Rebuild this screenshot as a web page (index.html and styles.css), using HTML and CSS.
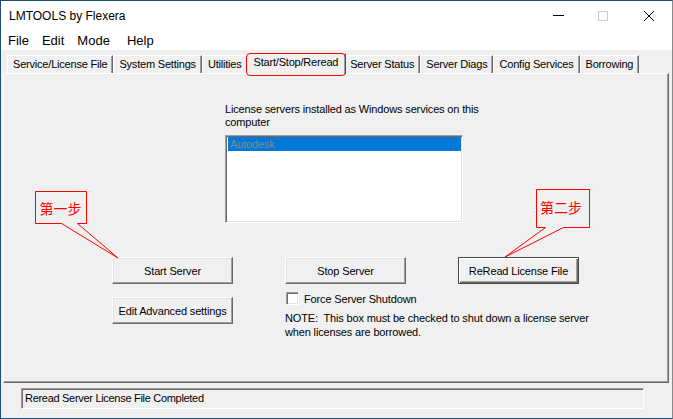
FILE: index.html
```html
<!DOCTYPE html>
<html lang="en">
<head>
<meta charset="utf-8">
<title>LMTOOLS by Flexera</title>
<link rel="stylesheet" href="styles.css">
</head>
<body>
<div class="window">
  <header class="titlebar">
    <span class="title">LMTOOLS by Flexera</span>
    <div class="caption-buttons">
      <span class="cap-btn cap-min"><svg width="12" height="10" viewBox="0 0 12 10"><path d="M0 4.5H11" stroke="#000" stroke-width="1"/></svg></span>
      <span class="cap-btn"><svg width="10" height="10" viewBox="0 0 10 10"><rect x="0.5" y="0.5" width="9" height="9" fill="none" stroke="#cccccc"/></svg></span>
      <span class="cap-btn"><svg width="10" height="10" viewBox="0 0 10 10"><path d="M0 0L10 10M10 0L0 10" stroke="#000" stroke-width="1"/></svg></span>
    </div>
  </header>
  <nav class="menubar">
    <span class="menu-item">File</span>
    <span class="menu-item">Edit</span>
    <span class="menu-item">Mode</span>
    <span class="menu-item">Help</span>
  </nav>
  <div class="client">
    <div class="tabs">
      <div class="tab">Service/License File</div>
      <div class="tab">System Settings</div>
      <div class="tab">Utilities</div>
      <div class="tab selected">Start/Stop/Reread</div>
      <div class="tab">Server Status</div>
      <div class="tab">Server Diags</div>
      <div class="tab">Config Services</div>
      <div class="tab">Borrowing</div>
    </div>
    <section class="panel">
      <div class="services">
        <p class="services-label">License servers installed as Windows services on this<br>computer</p>
        <div class="listbox">
          <div class="list-item selected">Autodesk</div>
        </div>
      </div>
      <div class="controls">
        <button class="btn">Start Server</button>
        <button class="btn">Stop Server</button>
        <button class="btn default">ReRead License File</button>
        <button class="btn btn-edit">Edit Advanced settings</button>
        <div class="shutdown">
          <label class="check"><span class="checkbox"></span>Force Server Shutdown</label>
          <p class="note">NOTE:&nbsp; This box must be checked to shut down a license server<br>when licenses are borrowed.</p>
        </div>
      </div>
    </section>
    <div class="statusbar">
      <div class="status-field">Reread Server License File Completed</div>
    </div>
  </div>
  <svg class="annotations" width="673" height="419" viewBox="0 0 673 419">
    <path d="M35.5 191.5H86.5V223.5H77.5L118 258L61.5 223.5H35.5Z" fill="none" stroke="#ff0000" stroke-width="1"/>
    <text class="callout-text" x="60.5" y="214" text-anchor="middle">第一步</text>
    <path d="M536.5 189.5H589.5V227.5H563.5L505 257L545.5 227.5H536.5Z" fill="none" stroke="#ff0000" stroke-width="1"/>
    <text class="callout-text" x="561" y="213" text-anchor="middle">第二步</text>
  </svg>
</div>
</body>
</html>
```

FILE: styles.css
```css
* {
  box-sizing: border-box;
}

html, body {
  margin: 0;
  padding: 0;
  background: #f0f0f0;
}

body {
  font-family: "Liberation Sans", Arial, sans-serif;
  color: #000;
}

.window {
  position: relative;
  width: 673px;
  height: 419px;
  border: 1px solid #1f4f72;
  border-right-color: #8a8a8a;
  background: #f0f0f0;
  overflow: hidden;
}

/* title bar */
.titlebar {
  display: flex;
  justify-content: space-between;
  align-items: stretch;
  height: 30px;
  background: #fff;
}

.title {
  padding-left: 8px;
  font-size: 12px;
  line-height: 30px;
  color: #000;
}

.caption-buttons {
  display: flex;
}

.cap-btn {
  display: flex;
  width: 46px;
  align-items: center;
  justify-content: center;
}

.cap-min {
  padding-left: 4px;
}

/* menu bar */
.menubar {
  display: flex;
  gap: 13px;
  height: 19px;
  padding: 1px 0 0 7px;
  background: #fff;
  font-size: 13px;
  line-height: 18px;
}

.menu-item:last-child {
  margin-left: 4px;
}

/* client area */
.client {
  font-size: 11px;
  letter-spacing: -0.15px;
}

.tabs {
  display: flex;
  align-items: flex-end;
  height: 23px;
  padding: 3px 0 0 6px;
  letter-spacing: -0.2px;
}

.tab {
  height: 18px;
  padding: 0 5px;
  border-top: 1px solid #fff;
  border-left: 1px solid #fff;
  border-right: 1px solid #696969;
  box-shadow: inset -1px 0 0 #a0a0a0;
  line-height: 17px;
  white-space: nowrap;
  background: #f0f0f0;
}

.tab.selected {
  position: relative;
  z-index: 2;
  height: 21px;
  margin: 0 -2px -1px;
  padding: 0 7px;
  line-height: 17px;
}

.tab.selected::after {
  content: "";
  position: absolute;
  top: -1px;
  bottom: -2px;
  left: -1px;
  right: -1px;
  border: 1px solid #ff0000;
  border-radius: 4px;
}

.panel {
  height: 310px;
  margin: 0 3px 0 2px;
  padding: 29px 0 0 108px;
  border-top: 1px solid #fff;
  border-left: 1px solid #fff;
  border-right: 1px solid #696969;
  border-bottom: 1px solid #696969;
  box-shadow: inset -1px -1px 0 #a0a0a0;
}

.services {
  padding-left: 113px;
}

.services-label {
  margin: 0;
  line-height: 13px;
  white-space: nowrap;
}

.listbox {
  width: 238px;
  height: 88px;
  margin-top: 6px;
  padding: 1px;
  background: #fff;
  border-top: 1px solid #a0a0a0;
  border-left: 1px solid #a0a0a0;
  border-right: 1px solid #fff;
  border-bottom: 1px solid #fff;
  box-shadow: inset 1px 1px 0 #696969, inset -1px -1px 0 #e3e3e3;
}

.list-item {
  height: 14px;
  padding-left: 2px;
  line-height: 14px;
}

.list-item.selected {
  margin-left: 1px;
  background: #0078d7;
  color: #7f8a96;
}

.controls {
  display: grid;
  grid-template-columns: 121px 121px 121px;
  column-gap: 52px;
  row-gap: 8px;
  margin-top: 34px;
}

.btn {
  width: 121px;
  height: 27px;
  padding: 0;
  font-family: "Liberation Sans", Arial, sans-serif;
  font-size: 11px;
  letter-spacing: -0.15px;
  color: #000;
  background: #f0f0f0;
  border-top: 1px solid #fff;
  border-left: 1px solid #fff;
  border-right: 1px solid #696969;
  border-bottom: 1px solid #696969;
  box-shadow: inset -1px -1px 0 #a0a0a0, inset 1px 1px 0 #e3e3e3;
}

.btn.default {
  border: 1px solid #4a4a4a;
  box-shadow: inset 1px 1px 0 #fff, inset -1px -1px 0 #696969, inset -2px -2px 0 #a0a0a0;
}

.btn-edit {
  margin-top: 5px;
}

.shutdown {
  grid-column: 2 / 4;
}

.check {
  display: flex;
  align-items: center;
  height: 13px;
  margin-left: 1px;
  white-space: nowrap;
}

.checkbox {
  width: 13px;
  height: 13px;
  margin-right: 5px;
  background: #fff;
  border-top: 1px solid #a0a0a0;
  border-left: 1px solid #a0a0a0;
  border-right: 1px solid #fff;
  border-bottom: 1px solid #fff;
  box-shadow: inset 1px 1px 0 #696969, inset -1px -1px 0 #e3e3e3;
}

.note {
  margin: 6px 0 0;
  line-height: 14px;
  white-space: nowrap;
}

/* status bar */
.statusbar {
  padding: 5px 0 0 20px;
}

.status-field {
  width: 623px;
  height: 21px;
  padding-left: 3px;
  border-top: 1px solid #a0a0a0;
  border-left: 1px solid #a0a0a0;
  border-right: 1px solid #fff;
  border-bottom: 1px solid #fff;
  box-shadow: inset 1px 1px 0 #696969;
  line-height: 19px;
  letter-spacing: -0.3px;
}

/* annotation overlay */
.annotations {
  position: absolute;
  left: -1px;
  top: -1px;
  pointer-events: none;
}

.callout-text {
  font-family: "Noto Sans CJK SC", "Noto Sans CJK JP", sans-serif;
  font-size: 14px;
  fill: #ff0000;
}
```
